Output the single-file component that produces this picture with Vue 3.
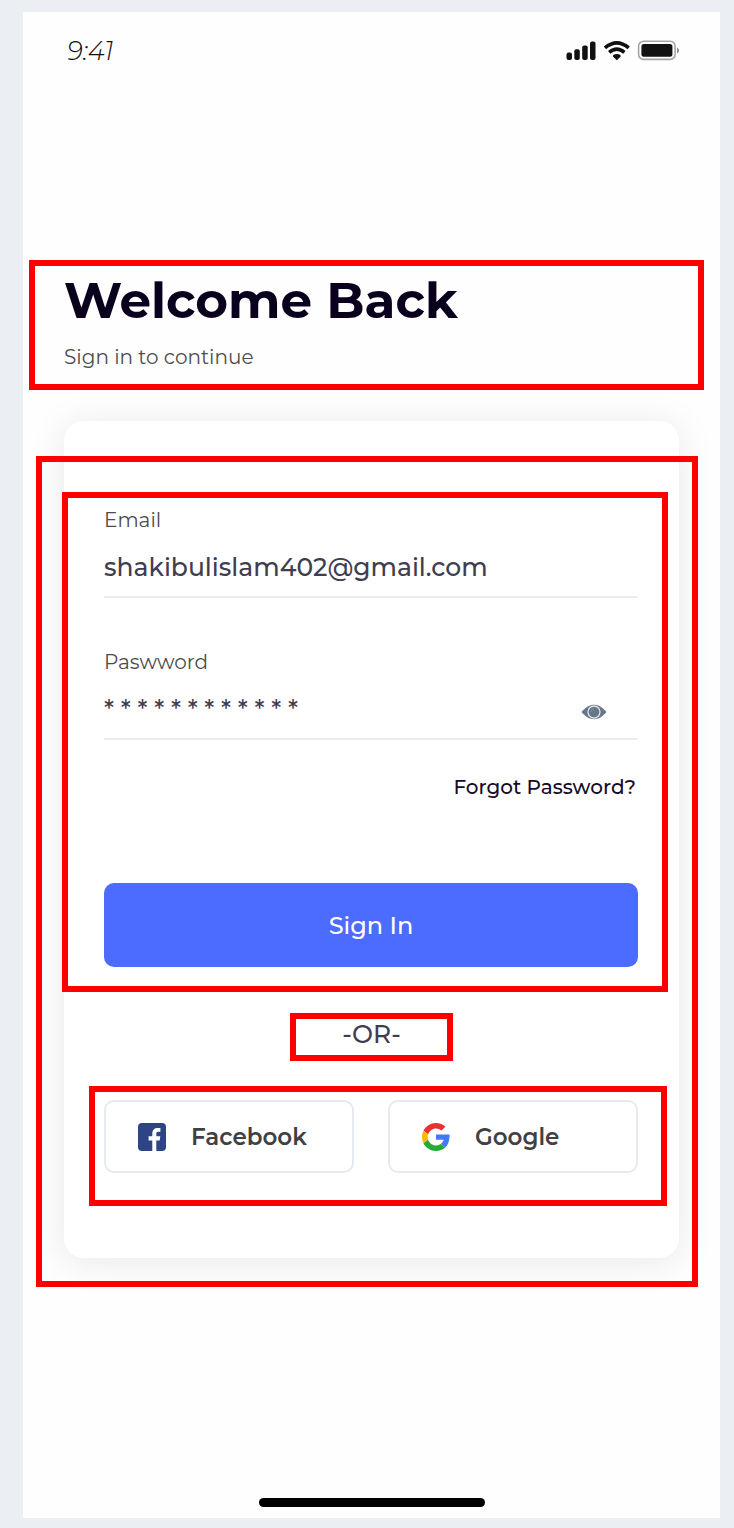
<script setup>
import { ref } from 'vue'

const email = ref('shakibulislam402@gmail.com')
const password = ref('* * * * * * * * * * * *')
</script>

<template>
  <div class="page">
    <main class="screen">
      <div class="status">
        <span class="time">9:41</span>
        <svg class="indicators" viewBox="0 0 114 22" aria-hidden="true">
          <g fill="#111">
            <rect x="0.5" y="12.5" width="5.5" height="7.5" rx="2" />
            <rect x="8.3" y="9.3" width="5.5" height="10.7" rx="2" />
            <rect x="16.2" y="5.5" width="5.5" height="14.5" rx="2" />
            <rect x="24" y="1.5" width="5.5" height="18.5" rx="2" />
            <path d="M50.8 20.2 46.9 16.4Q46.500 14.200 50.800 14Q55.100 14.200 54.700 16.400Z" />
          </g>
          <g fill="none" stroke="#111" stroke-width="3.600">
            <path d="M38.900 7.900Q50.800-2.200 62.700 7.900" />
            <path d="M43.200 12.400Q50.800 5.900 58.400 12.400" />
          </g>
          <rect x="72.600" y="1.200" width="36.500" height="18.200" rx="5" fill="none" stroke="#a5a5a5" stroke-width="1.600" />
          <rect x="75.400" y="4" width="31" height="12.800" rx="2.500" fill="#111" />
          <path d="M111 7.500Q113 8.300 113 10.500T111 13.500Z" fill="#8c8c8c" />
        </svg>
      </div>

      <header class="intro marked">
        <h1>Welcome Back</h1>
        <p>Sign in to continue</p>
      </header>

      <section class="card">
        <form class="login marked" @submit.prevent>
          <div class="field">
            <label for="email">Email</label>
            <div class="entry">
              <input id="email" v-model="email" type="text" autocomplete="off" spellcheck="false" />
            </div>
          </div>
          <div class="field">
            <label for="password">Paswword</label>
            <div class="entry">
              <input id="password" v-model="password" type="text" autocomplete="off" spellcheck="false" />
              <button class="reveal" type="button" aria-label="Show password">
                <svg viewBox="0 0 26 16" aria-hidden="true">
                  <path d="M.5 8C5 3 8.500.8 13 .8S21 3 25.500 8C21 13 17.500 15.200 13 15.200S5 13 .5 8Z" fill="#68768a" />
                  <circle cx="13" cy="8" r="6" fill="#68768a" stroke="#dfe3e8" stroke-width="1.3" />
                  <path d="M10.200 7.500A3 3 0 0 1 13 4.700" fill="none" stroke="#8995a5" stroke-width="1" />
                </svg>
              </button>
            </div>
          </div>
          <a class="forgot" href="#">Forgot Password?</a>
          <button class="submit" type="submit">Sign In</button>
        </form>

        <p class="or marked">-OR-</p>

        <div class="social marked">
          <button type="button">
            <svg viewBox="0 0 28 28" aria-hidden="true">
              <rect width="28" height="28" rx="4" fill="#2d4486" />
              <path d="M14.300 28V17.500H10.600V13.300H14.300V10.500C14.300 6.800 16.500 4.900 19.700 4.900H22.400V8.700H20.300C18.700 8.700 18.300 9.500 18.300 10.700V13.300H22.300L21.700 17.500H18.300V28Z" fill="#fff" />
            </svg>
            <span>Facebook</span>
          </button>
          <button type="button">
            <svg viewBox="0 0 48 48" aria-hidden="true">
              <path fill="#eb3030" d="M24 9.500c3.540 0 6.710 1.220 9.210 3.600l6.850-6.850C35.900 2.380 30.470 0 24 0 14.620 0 6.510 5.380 2.560 13.220l7.980 6.190C12.430 13.720 17.740 9.500 24 9.500z" />
              <path fill="#4479f5" d="M47.300 19.700H24v9.050h12.940c-.58 2.960-2.260 5.480-4.780 7.180l7.730 6c4.510-4.180 7.410-10.360 7.410-22.230z" />
              <path fill="#fbb90b" d="M10.530 28.590c-.48-1.450-.76-2.990-.76-4.590s.27-3.140.76-4.590l-7.980-6.190C.92 16.460 0 20.120 0 24c0 3.880.92 7.540 2.560 10.780l7.970-6.190z" />
              <path fill="#26ab37" d="M24 48c6.480 0 11.930-2.130 15.890-5.810l-7.730-6c-2.150 1.450-4.920 2.300-8.160 2.300-6.260 0-11.570-4.220-13.470-9.910l-7.980 6.190C6.510 42.620 14.620 48 24 48z" />
            </svg>
            <span>Google</span>
          </button>
        </div>
        <div class="frame marked"></div>
      </section>

      <div class="home"></div>
    </main>
  </div>
</template>

<style>
body {
  margin: 0;
  background: #ebeff4;
}
</style>

<style scoped>
.page {
  box-sizing: border-box;
  display: flex;
  min-height: 100vh;
  padding: 12px 14px 10px 23px;
  background: #ebeff4;
  font-family: Montserrat, Inter, "Liberation Sans", sans-serif;
  color: #3f3d50;
}

.page * {
  box-sizing: border-box;
}

.screen {
  flex: 1;
  min-width: 0;
  display: flex;
  flex-direction: column;
  padding-bottom: 11px;
  background: #fefefe;
}

.marked {
  border: 6px solid #fe0000;
}

.status {
  display: flex;
  justify-content: space-between;
  align-items: center;
  height: 78px;
  padding: 0 40px 0 44px;
}

.time {
  font-size: 26px;
  font-style: italic;
  font-weight: 300;
  color: #111;
}

.indicators {
  width: 114px;
  height: 22px;
}

.intro {
  margin: 170px 16px 0 6px;
  padding: 5px 29px 15px;
}

h1 {
  margin: 0;
  font-size: 50px;
  line-height: 60px;
  font-weight: 700;
  color: #0a001e;
}

.intro p {
  margin: 14px 0 0;
  font-size: 20px;
  line-height: 24px;
  color: #4c4c4c;
}

.card {
  position: relative;
  display: flex;
  flex-direction: column;
  margin: 31px 41px 48px;
  padding: 71px 0 52px;
  border-radius: 20px;
  background: #fff;
  box-shadow: 0 4px 36px rgba(30, 40, 60, 0.1);
}

.frame {
  position: absolute;
  inset: 35px -19px -29px -28px;
  pointer-events: none;
}

.login {
  display: flex;
  flex-direction: column;
  margin: 0 11px 0 -2px;
  padding: 10px 24px 19px 36px;
}

.field {
  display: flex;
  flex-direction: column;
  gap: 8px;
}

.field + .field {
  margin-top: 52px;
}

label {
  font-size: 20px;
  line-height: 24px;
  color: #4c4c4c;
}

.entry {
  display: flex;
  align-items: center;
  height: 58px;
  padding-bottom: 2px;
  border-bottom: 2px solid #e9edf1;
}

input {
  flex: 1;
  min-width: 0;
  height: 40px;
  padding: 0;
  border: 0;
  outline: 0;
  background: none;
  font: inherit;
  font-size: 25px;
  font-weight: 500;
  color: #3f3d50;
}

.reveal {
  display: flex;
  margin-right: 31px;
  padding: 6px 0 0;
  border: 0;
  background: none;
}

.reveal svg {
  width: 26px;
  height: 16px;
}

.forgot {
  align-self: flex-end;
  margin: 35px 2px 0 0;
  font-size: 20px;
  line-height: 24px;
  font-weight: 500;
  color: #160b2b;
  text-decoration: none;
}

.submit {
  height: 84px;
  margin-top: 84px;
  border: 0;
  border-radius: 10px;
  background: #4c6bff;
  font: inherit;
  font-size: 24px;
  font-weight: 500;
  color: #fff;
}

.or {
  align-self: center;
  width: 163px;
  margin: 21px 0 25px;
  padding-bottom: 4px;
  font-size: 25px;
  line-height: 30px;
  height: 48px;
  font-weight: 500;
  text-align: center;
}

.social {
  display: grid;
  grid-template-columns: 1fr 1fr;
  gap: 34px;
  margin: 0 12px 0 25px;
  padding: 8px 23px 27px 9px;
}

.social button {
  display: flex;
  align-items: center;
  gap: 25px;
  height: 73px;
  padding: 0 32px;
  border: 2px solid #e6eaef;
  border-radius: 10px;
  background: #fff;
  font: inherit;
  font-size: 23px;
  font-weight: 600;
  color: #414141;
}

.social svg {
  width: 28px;
  height: 28px;
}

.home {
  width: 226px;
  height: 9px;
  margin: auto auto 0;
  border-radius: 5px;
  background: #000;
}
</style>
